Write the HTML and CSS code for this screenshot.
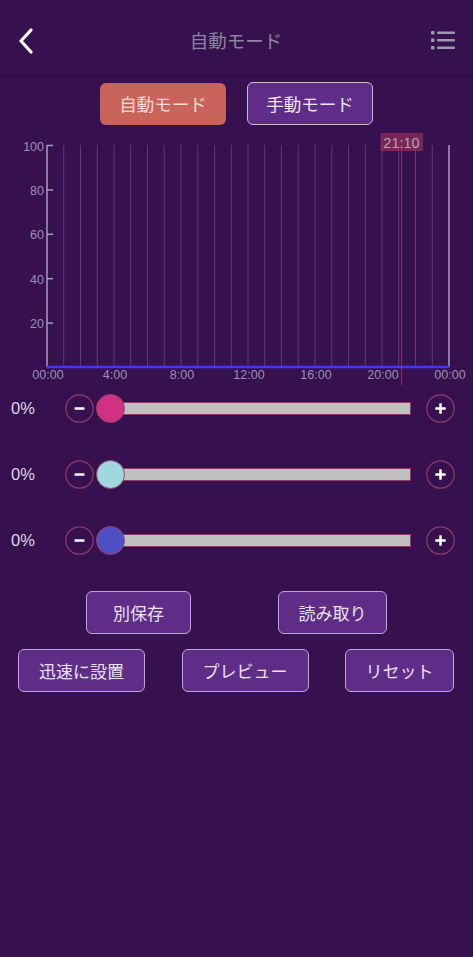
FILE: index.html
```html
<!DOCTYPE html>
<html lang="ja">
<head>
<meta charset="utf-8">
<link rel="stylesheet" href="styles.css">
</head>
<body>
<div class="page">
  <header class="header">
    <svg class="back" width="18" height="26" viewBox="0 0 18 26"><path d="M14 2 L4 13 L14 24" fill="none" stroke="#fff" stroke-width="3.2" stroke-linecap="round" stroke-linejoin="round"/></svg>
    <div class="title">自動モード</div>
    <svg class="menu" width="24" height="20" viewBox="0 0 24 20"><g fill="#9a9bab"><rect x="0" y="1" width="3.5" height="3.5" rx="1"/><rect x="0" y="8.5" width="3.5" height="3.5" rx="1"/><rect x="0" y="16" width="3.5" height="3.5" rx="1"/><rect x="6" y="1.5" width="18" height="2.6" rx="1"/><rect x="6" y="9" width="18" height="2.6" rx="1"/><rect x="6" y="16.5" width="18" height="2.6" rx="1"/></g></svg>
  </header>

  <div class="modes">
    <div class="mode mode-active">自動モード</div>
    <div class="mode mode-idle">手動モード</div>
  </div>

  <svg class="chart" width="473" height="267" viewBox="0 0 473 267">
    <g stroke="#5c3c78" stroke-width="1">
      <line x1="63.75" y1="20" x2="63.75" y2="242"/><line x1="80.5" y1="20" x2="80.5" y2="242"/><line x1="97.25" y1="20" x2="97.25" y2="242"/><line x1="114" y1="20" x2="114" y2="242"/><line x1="130.75" y1="20" x2="130.75" y2="242"/><line x1="147.5" y1="20" x2="147.5" y2="242"/><line x1="164.25" y1="20" x2="164.25" y2="242"/><line x1="181" y1="20" x2="181" y2="242"/><line x1="197.75" y1="20" x2="197.75" y2="242"/><line x1="214.5" y1="20" x2="214.5" y2="242"/><line x1="231.25" y1="20" x2="231.25" y2="242"/><line x1="248" y1="20" x2="248" y2="242"/><line x1="264.75" y1="20" x2="264.75" y2="242"/><line x1="281.5" y1="20" x2="281.5" y2="242"/><line x1="298.25" y1="20" x2="298.25" y2="242"/><line x1="315" y1="20" x2="315" y2="242"/><line x1="331.75" y1="20" x2="331.75" y2="242"/><line x1="348.5" y1="20" x2="348.5" y2="242"/><line x1="365.25" y1="20" x2="365.25" y2="242"/><line x1="382" y1="20" x2="382" y2="242"/><line x1="398.75" y1="20" x2="398.75" y2="242"/><line x1="415.5" y1="20" x2="415.5" y2="242"/><line x1="432.25" y1="20" x2="432.25" y2="242"/>
    </g>
    <g stroke="#a49cbc" stroke-width="1.5">
      <line x1="47" y1="20" x2="47" y2="242"/>
      <line x1="449" y1="20" x2="449" y2="242"/>
      <line x1="47" y1="20.5" x2="53" y2="20.5"/>
      <line x1="47" y1="64.9" x2="53" y2="64.9"/>
      <line x1="47" y1="109.3" x2="53" y2="109.3"/>
      <line x1="47" y1="153.7" x2="53" y2="153.7"/>
      <line x1="47" y1="198.1" x2="53" y2="198.1"/>
    </g>
    <g class="axis-text" text-anchor="end">
      <text x="44" y="25.5">100</text>
      <text x="44" y="69.9">80</text>
      <text x="44" y="114.3">60</text>
      <text x="44" y="158.7">40</text>
      <text x="44" y="203.1">20</text>
    </g>
    <line x1="47" y1="242" x2="449" y2="242" stroke="#3b3bf5" stroke-width="2.5"/>
    <g class="axis-text" text-anchor="middle">
      <text x="48" y="254">00:00</text>
      <text x="115" y="254">4:00</text>
      <text x="182" y="254">8:00</text>
      <text x="249" y="254">12:00</text>
      <text x="316" y="254">16:00</text>
      <text x="383" y="254">20:00</text>
      <text x="450" y="254">00:00</text>
    </g>
    <rect x="380.5" y="8" width="42.5" height="18" fill="#c8405a" fill-opacity="0.45"/>
    <line x1="401.5" y1="15" x2="401.5" y2="260" stroke="#a8345a" stroke-opacity="0.8" stroke-width="1"/>
    <text class="cursor-text" x="401.5" y="22.5" text-anchor="middle">21:10</text>
  </svg>

  <div class="sliders">
    <div class="slider-row">
      <div class="pct">0%</div>
      <div class="step"><svg width="29" height="29" viewBox="0 0 29 29"><circle cx="14.5" cy="14.5" r="13.7" fill="none" stroke="#8c3a60" stroke-width="1.3"/><rect x="9.5" y="13.3" width="10" height="2.5" rx="0.5" fill="#fff"/></svg></div>
      <div class="track">
        <div class="bar"></div>
        <div class="thumb thumb-pink"></div>
      </div>
      <div class="step step-plus"><svg width="29" height="29" viewBox="0 0 29 29"><circle cx="14.5" cy="14.5" r="13.7" fill="none" stroke="#8c3a60" stroke-width="1.3"/><rect x="9.3" y="13.3" width="10.4" height="2.5" rx="0.5" fill="#fff"/><rect x="13.25" y="9.3" width="2.5" height="10.4" rx="0.5" fill="#fff"/></svg></div>
    </div>
    <div class="slider-row">
      <div class="pct">0%</div>
      <div class="step"><svg width="29" height="29" viewBox="0 0 29 29"><circle cx="14.5" cy="14.5" r="13.7" fill="none" stroke="#8c3a60" stroke-width="1.3"/><rect x="9.5" y="13.3" width="10" height="2.5" rx="0.5" fill="#fff"/></svg></div>
      <div class="track">
        <div class="bar"></div>
        <div class="thumb thumb-cyan"></div>
      </div>
      <div class="step step-plus"><svg width="29" height="29" viewBox="0 0 29 29"><circle cx="14.5" cy="14.5" r="13.7" fill="none" stroke="#8c3a60" stroke-width="1.3"/><rect x="9.3" y="13.3" width="10.4" height="2.5" rx="0.5" fill="#fff"/><rect x="13.25" y="9.3" width="2.5" height="10.4" rx="0.5" fill="#fff"/></svg></div>
    </div>
    <div class="slider-row">
      <div class="pct">0%</div>
      <div class="step"><svg width="29" height="29" viewBox="0 0 29 29"><circle cx="14.5" cy="14.5" r="13.7" fill="none" stroke="#8c3a60" stroke-width="1.3"/><rect x="9.5" y="13.3" width="10" height="2.5" rx="0.5" fill="#fff"/></svg></div>
      <div class="track">
        <div class="bar"></div>
        <div class="thumb thumb-blue"></div>
      </div>
      <div class="step step-plus"><svg width="29" height="29" viewBox="0 0 29 29"><circle cx="14.5" cy="14.5" r="13.7" fill="none" stroke="#8c3a60" stroke-width="1.3"/><rect x="9.3" y="13.3" width="10.4" height="2.5" rx="0.5" fill="#fff"/><rect x="13.25" y="9.3" width="2.5" height="10.4" rx="0.5" fill="#fff"/></svg></div>
    </div>
  </div>

  <div class="actions actions-top">
    <div class="btn btn-save">別保存</div>
    <div class="btn btn-load">読み取り</div>
  </div>
  <div class="actions actions-bottom">
    <div class="btn btn-wide">迅速に設置</div>
    <div class="btn btn-wide">プレビュー</div>
    <div class="btn btn-reset">リセット</div>
  </div>
</div>
</body>
</html>
```

FILE: styles.css
```css
* { box-sizing: border-box; }
html, body {
  margin: 0;
  padding: 0;
  background: #37114f;
}
body {
  font-family: "Liberation Sans", "Noto Sans CJK JP", sans-serif;
  width: 473px;
  height: 957px;
  overflow: hidden;
}
.page {
  display: flex;
  flex-direction: column;
}
.header {
  height: 76px;
  border-bottom: 1px solid #2b0c3f;
  display: flex;
  align-items: center;
  justify-content: space-between;
  padding: 6px 18px 0 17px;
}
.back { display: block; }
.menu { display: block; margin-top: -1px; }
.title {
  font-family: "Noto Sans CJK JP", sans-serif;
  font-size: 18.5px;
  color: #8a8699;
  margin-top: -2px;
  margin-left: 6px;
}
.modes {
  display: flex;
  justify-content: center;
  gap: 21px;
  margin-top: 6px;
  height: 43px;
  align-items: center;
}
.mode {
  width: 126px;
  height: 42px;
  border-radius: 6px;
  display: flex;
  align-items: center;
  justify-content: center;
  font-family: "Noto Sans CJK JP", sans-serif;
  font-size: 17.5px;
}
.mode-active {
  background: #c8645a;
  color: #f2dcdc;
}
.mode-idle {
  height: 43px;
  background: #5f2d88;
  border: 1.5px solid #c9c0d6;
  color: #ece6f2;
}
.chart {
  display: block;
}
.axis-text text {
  font-family: "Liberation Sans", sans-serif;
  font-size: 12.5px;
  fill: #9892b2;
}
.cursor-text {
  font-family: "Liberation Sans", sans-serif;
  font-size: 14.5px;
  fill: #b0a6bc;
}
.sliders {
  display: flex;
  flex-direction: column;
  gap: 34px;
}
.slider-row {
  display: flex;
  align-items: center;
  height: 32px;
  padding-left: 11px;
}
.pct {
  width: 54px;
  font-size: 16.5px;
  color: #ddd6e4;
}
.step {
  width: 29px;
  height: 29px;
}
.step svg { display: block; }
.step-plus { margin-left: 15px; }
.track {
  position: relative;
  width: 315px;
  height: 29px;
  margin-left: 2px;
  display: flex;
  align-items: center;
}
.bar {
  margin-left: 14px;
  flex: 1;
  height: 13px;
  background: #c0c0c0;
  border: 1.5px solid #8e3c62;
}
.thumb {
  position: absolute;
  left: 0;
  top: 0;
  width: 29px;
  height: 29px;
  border-radius: 50%;
  border: 1px solid #9a4466;
}
.thumb-pink { background: #d03182; }
.thumb-cyan { background: #9fd9df; }
.thumb-blue { background: #4e50c6; }
.actions {
  display: flex;
}
.actions-top {
  margin-top: 35px;
  padding-left: 86px;
  gap: 87px;
}
.actions-bottom {
  margin-top: 15px;
  padding-left: 18px;
  gap: 36.5px;
}
.btn {
  height: 43px;
  border-radius: 6px;
  background: #5f2d88;
  border: 1.5px solid #b9a9cd;
  color: #e8e1ef;
  font-family: "Noto Sans CJK JP", sans-serif;
  font-size: 17px;
  display: flex;
  align-items: center;
  justify-content: center;
}
.btn-save { width: 105px; }
.btn-load { width: 109px; }
.btn-wide { width: 127px; }
.btn-reset { width: 109px; }
```
